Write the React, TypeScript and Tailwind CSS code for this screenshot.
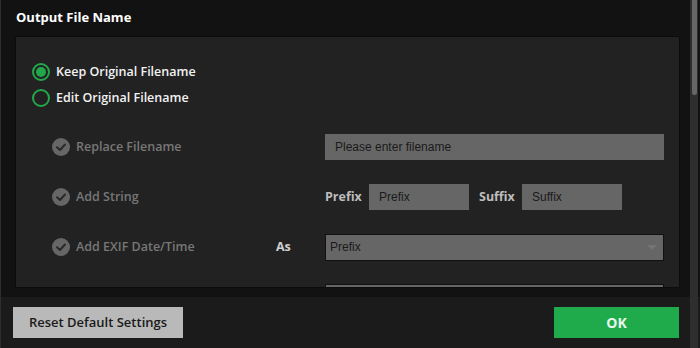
const font = { fontFamily: '"Open Sans", "Noto Sans", sans-serif' };

const Radio = ({ checked, label }: { checked: boolean; label: string }) => (
  <div className="flex items-center h-[26px] gap-[6px]">
    <span className="w-[18px] h-[18px] rounded-full border-2 border-[#22a84a] flex items-center justify-center">
      {checked && <span className="w-[10px] h-[10px] rounded-full bg-[#22a84a]" />}
    </span>
    <span className="text-[12.5px] font-semibold text-[#f2f2f2]">{label}</span>
  </div>
);

const CheckLabel = ({ label }: { label: string }) => (
  <div className="flex items-center gap-[6px]">
    <svg width="18" height="18" viewBox="0 0 18 18">
      <circle cx="9" cy="9" r="9" fill="#666666" />
      <polyline points="5,9.2 8,12 13,6.5" fill="none" stroke="#2a2a2a" strokeWidth="2" strokeLinecap="round" strokeLinejoin="round" />
    </svg>
    <span className="text-[12.5px] font-semibold text-[#777777]">{label}</span>
  </div>
);

const TextBox = ({ value, className }: { value: string; className: string }) => (
  <div
    className={`h-[26px] bg-[#666666] flex items-center px-[10px] text-[12px] text-[#1a1a1a] ${className}`}
    style={{ fontFamily: '"Liberation Sans", Arial, sans-serif' }}
  >
    {value}
  </div>
);

export default function App() {
  return (
    <div className="w-[700px] h-[348px] bg-[#121212] flex flex-col relative overflow-hidden border-l border-[#2e2e2e]" style={font}>
      {/* Scrollbar */}
      <div className="absolute top-0 right-[2px] w-[8px] h-full bg-[#2e2e2e]">
        <div className="mx-auto w-[5px] h-[95px] bg-[#666666] rounded-b-sm" />
      </div>

      {/* Title */}
      <div className="h-[36px] flex items-center pl-[15px] pb-[1px] text-[13px] font-bold text-white">
        Output File Name
      </div>

      {/* Panel */}
      <div className="flex-1 pl-[14px] pr-[20px] overflow-hidden">
        <div className="h-full bg-[#222222] border border-[#0c0c0c] rounded-tr-[2px] pl-[16px] pr-[15px] pt-[22px] overflow-hidden">
          <Radio checked label="Keep Original Filename" />
          <Radio checked={false} label="Edit Original Filename" />

          <div className="mt-[11px] pl-[20px]">
            <div className="grid grid-cols-[224px_49px_1fr] items-center h-[50px]">
              <CheckLabel label="Replace Filename" />
              <span />
              <TextBox value="Please enter filename" className="w-[339px]" />
            </div>
            <div className="grid grid-cols-[224px_49px_1fr] items-center h-[50px]">
              <CheckLabel label="Add String" />
              <span />
              <div className="flex items-center">
                <span className="w-[44px] text-[12.5px] font-bold text-[#bdbdbd]">Prefix</span>
                <TextBox value="Prefix" className="w-[100px]" />
                <span className="w-[43px] ml-[10px] text-[12.5px] font-bold text-[#bdbdbd]">Suffix</span>
                <TextBox value="Suffix" className="w-[100px]" />
              </div>
            </div>
            <div className="grid grid-cols-[224px_49px_1fr] items-center h-[50px]">
              <CheckLabel label="Add EXIF Date/Time" />
              <span className="text-[12.5px] font-bold text-[#d0d0d0]">As</span>
              <div
                className="w-[339px] h-[27px] bg-[#666666] border border-[#111111] flex items-center justify-between pl-[4px] pr-[6px] text-[12px] text-[#1a1a1a]"
                style={{ fontFamily: '"Liberation Sans", Arial, sans-serif' }}
              >
                <span>Prefix</span>
                <span className="w-0 h-0 border-l-[5px] border-r-[5px] border-t-[5px] border-l-transparent border-r-transparent border-t-[#747474]" />
              </div>
            </div>
            <div className="grid grid-cols-[224px_49px_1fr] items-center h-[50px]">
              <span />
              <span />
              <div className="w-[339px] h-[27px] bg-[#666666] border border-[#111111]" />
            </div>
          </div>
        </div>
      </div>

      {/* Gap band */}
      <div className="h-[9px]" />

      {/* Footer */}
      <div className="h-[51px] bg-[#1b1b1b] flex items-center justify-between pl-[12px] pr-[21px]">
        <button className="w-[170px] h-[31px] bg-[#b9b9b9] text-[13px] font-semibold text-[#1a1a1a]">
          Reset Default Settings
        </button>
        <button className="w-[125px] h-[31px] bg-[#1fab4c] text-[14px] font-bold text-[#e8f6ec]">
          OK
        </button>
      </div>
    </div>
  );
}
